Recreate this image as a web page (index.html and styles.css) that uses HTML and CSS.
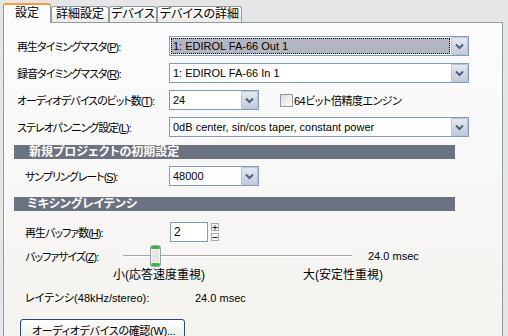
FILE: index.html
```html
<!DOCTYPE html>
<html lang="ja">
<head>
    <meta charset="UTF-8">
    <title>オーディオ設定</title>
    <link rel="stylesheet" href="styles.css">
</head>
<body>
    <div class="tabs">
        <div class="tab active w1">設定</div>
        <div class="tab w2">詳細設定</div>
        <div class="tab w3">デバイス</div>
        <div class="tab w4">デバイスの詳細</div>
    </div>
    <div class="panel">
        <div class="row r1">
            <span class="label">再生タイミングマスタ(<u>P</u>):</span>
            <div class="combo wide focused">
                <span class="value">1: EDIROL FA-66 Out 1</span>
                <span class="drop"><svg width="9" height="7" viewBox="0 0 9 7"><path d="M1 1.5 L4.5 5 L8 1.5" fill="none" stroke="#4d6185" stroke-width="2"/></svg></span>
            </div>
        </div>
        <div class="row">
            <span class="label">録音タイミングマスタ(<u>R</u>):</span>
            <div class="combo wide">
                <span class="value">1: EDIROL FA-66 In 1</span>
                <span class="drop"><svg width="9" height="7" viewBox="0 0 9 7"><path d="M1 1.5 L4.5 5 L8 1.5" fill="none" stroke="#4d6185" stroke-width="2"/></svg></span>
            </div>
        </div>
        <div class="row">
            <span class="label">オーディオデバイスのビット数(<u>T</u>):</span>
            <div class="combo narrow">
                <span class="value">24</span>
                <span class="drop"><svg width="9" height="7" viewBox="0 0 9 7"><path d="M1 1.5 L4.5 5 L8 1.5" fill="none" stroke="#4d6185" stroke-width="2"/></svg></span>
            </div>
            <span class="check"></span>
            <span class="check-label">64ビット倍精度エンジン</span>
        </div>
        <div class="row">
            <span class="label">ステレオパンニング設定(<u>L</u>):</span>
            <div class="combo wide">
                <span class="value">0dB center, sin/cos taper, constant power</span>
                <span class="drop"><svg width="9" height="7" viewBox="0 0 9 7"><path d="M1 1.5 L4.5 5 L8 1.5" fill="none" stroke="#4d6185" stroke-width="2"/></svg></span>
            </div>
        </div>

        <div class="section s1">新規プロジェクトの初期設定</div>
        <div class="row sub r-rate">
            <span class="label">サンプリングレート(<u>S</u>):</span>
            <div class="combo narrow">
                <span class="value">48000</span>
                <span class="drop"><svg width="9" height="7" viewBox="0 0 9 7"><path d="M1 1.5 L4.5 5 L8 1.5" fill="none" stroke="#4d6185" stroke-width="2"/></svg></span>
            </div>
        </div>

        <div class="section s2">ミキシングレイテンシ</div>
        <div class="row sub r-buf">
            <span class="label">再生バッファ数(<u>H</u>):</span>
            <div class="spin-box">2</div>
            <div class="spin">
                <span class="spin-btn"><svg width="7" height="5" viewBox="0 0 7 5"><path d="M0.5 2.5 H6.5 M3.5 0 V5" stroke="#000" stroke-width="1"/></svg></span>
                <span class="spin-btn"><svg width="7" height="5" viewBox="0 0 7 5"><path d="M0.5 2.5 H6.5" stroke="#000" stroke-width="1"/></svg></span>
            </div>
        </div>
        <div class="row sub r-size">
            <span class="label short">バッファサイズ(<u>Z</u>):</span>
            <div class="track">
                <span class="thumb">
                    <svg width="11" height="22" viewBox="0 0 11 22">
                        <rect x="0.5" y="0.5" width="10" height="21" rx="2" fill="#f2f2ee" stroke="#9aa2a8"/>
                        <rect x="1" y="1" width="9" height="3" rx="1.5" fill="#3cb33c"/>
                        <rect x="1" y="18" width="9" height="3" rx="1.5" fill="#3cb33c"/>
                        <rect x="2" y="5" width="7" height="12" fill="#e6e6e0"/>
                    </svg>
                </span>
            </div>
            <span class="size-value">24.0 msec</span>
        </div>
        <div class="scale">
            <span class="small">小(応答速度重視)</span>
            <span class="large">大(安定性重視)</span>
        </div>
        <div class="latency">
            <span class="lat-label">レイテンシ(48kHz/stereo):</span>
            <span>24.0 msec</span>
        </div>
        <button class="check-btn">オーディオデバイスの確認(<u>W</u>)...</button>
    </div>
</body>
</html>
```

FILE: styles.css
```css
* {
    box-sizing: border-box;
}
body {
    margin: 0;
    width: 508px;
    height: 336px;
    overflow: hidden;
    background-color: #e6e6e9;
    font-family: "Liberation Sans", "Noto Sans CJK JP", sans-serif;
    font-size: 11px;
    font-feature-settings: "palt";
    color: #000;
}
u {
    text-decoration: underline;
    text-underline-offset: 1px;
}
.tabs {
    display: flex;
    align-items: flex-end;
    height: 22px;
    padding-left: 3px;
}
.tab {
    height: 16px;
    border: 1px solid #919b9c;
    border-bottom: none;
    border-radius: 3px 3px 0 0;
    background: linear-gradient(#ffffff, #ecebe6);
    text-align: center;
    font-size: 12px;
    line-height: 15px;
}
.tab.active {
    position: relative;
    z-index: 1;
    height: 20px;
    margin-bottom: -1px;
    border-top: 2px solid #f0a030;
    background: #fcfcfe;
    line-height: 17px;
}
.w1 { width: 48px; }
.w2 { width: 58px; }
.w3 { width: 48px; }
.w4 { width: 85px; }
.panel {
    margin-left: 3px;
    width: 500px;
    height: 320px;
    border: 1px solid #919b9c;
    background: linear-gradient(#fcfcfe, #f4f3ef);
    padding: 13px 0 0 13px;
    display: flex;
    flex-direction: column;
}
.row {
    display: flex;
    align-items: center;
    height: 20px;
    margin-top: 7px;
    white-space: nowrap;
}
.row.r1 {
    margin-top: 0;
}
.label {
    width: 152px;
    flex: none;
    letter-spacing: -1px;
}
.row.sub {
    padding-left: 8px;
}
.row.sub .label {
    width: 144px;
}
.combo {
    display: flex;
    height: 20px;
    border: 1px solid #7f9db9;
    background: #fff;
}
.combo.wide {
    width: 300px;
}
.combo.narrow {
    width: 90px;
}
.combo .value {
    flex: 1;
    margin: 1px;
    padding-left: 2px;
    line-height: 16px;
    overflow: hidden;
}
.combo.focused .value {
    background: #b3b6c1;
    outline: 1px dotted #000;
    outline-offset: -1px;
}
.drop {
    width: 17px;
    height: 18px;
    flex: none;
    display: flex;
    align-items: center;
    justify-content: center;
    border: 1px solid #b9c4dc;
    border-radius: 1px;
    background: linear-gradient(#e4e8f2, #c3cadb);
}
.check {
    width: 13px;
    height: 13px;
    margin-left: 21px;
    border: 1px solid #8c98ac;
    background: linear-gradient(135deg, #dcdcd6, #fbfbf9);
}
.check-label {
    margin-left: 1px;
    letter-spacing: -0.5px;
}
.section {
    margin: 8px 0 0 -3px;
    width: 441px;
    height: 14px;
    background: #6b7282;
    color: #fff;
    font-weight: bold;
    font-size: 12px;
    line-height: 14px;
    padding-left: 15px;
}
.section.s2 {
    margin-top: 11px;
    padding-left: 13px;
}
.row.r-buf {
    margin-top: 11px;
}
.spin-box {
    width: 38px;
    height: 20px;
    margin-left: 1px;
    border: 1px solid #7f9db9;
    background: #fff;
    padding-left: 3px;
    font-size: 12px;
    line-height: 18px;
}
.spin {
    display: flex;
    flex-direction: column;
    gap: 2px;
    margin-left: 3px;
}
.spin-btn {
    width: 8px;
    height: 8px;
    display: flex;
    align-items: center;
    justify-content: center;
    border: 1px solid #a8a8a8;
    background: #f6f6f4;
}
.row.r-size {
    height: 22px;
    margin-top: 3px;
}
.label.short,
.row.sub .label.short {
    width: 98px;
}
.track {
    width: 229px;
    height: 22px;
    display: flex;
    align-items: center;
    background: linear-gradient(transparent 10px, #a7a7a7 10px, #a7a7a7 11px, #ffffff 11px, #ffffff 12px, transparent 12px);
}
.thumb {
    display: flex;
    margin-left: 27px;
}
.size-value {
    margin-left: 16px;
}
.scale {
    display: flex;
    height: 14px;
    margin-top: 1px;
    line-height: 14px;
    font-size: 12px;
    white-space: nowrap;
}
.scale .small {
    margin-left: 96px;
    width: 190px;
}
.latency {
    display: flex;
    height: 14px;
    margin-top: 9px;
    padding-left: 8px;
    line-height: 14px;
    white-space: nowrap;
}
.lat-label {
    width: 170px;
}
.check-btn {
    align-self: flex-start;
    margin: 14px 0 0 3px;
    width: 165px;
    height: 23px;
    border: 1px solid #2c4870;
    border-radius: 3px;
    background: linear-gradient(#ffffff, #ecebe6);
    font-family: inherit;
    font-size: 11px;
    font-feature-settings: "palt";
    letter-spacing: -0.3px;
    white-space: nowrap;
    text-align: left;
    padding: 0 0 0 11px;
    color: #000;
}
```
